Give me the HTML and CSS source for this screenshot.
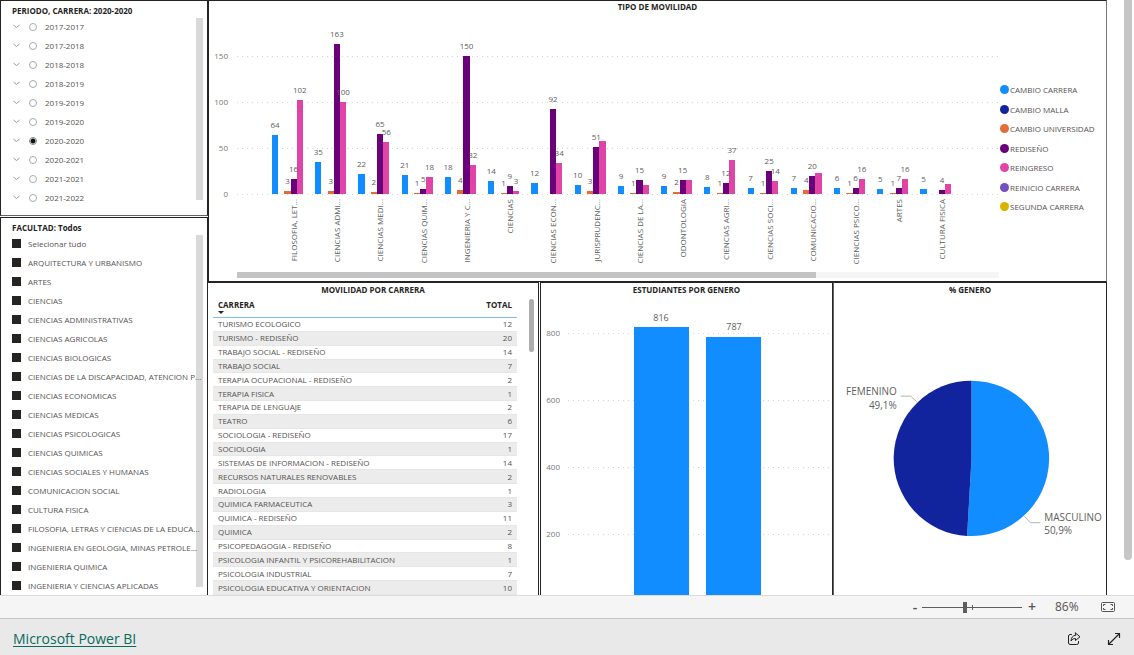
FILE: index.html
```html
<!DOCTYPE html>
<html lang="es">
<head>
<meta charset="utf-8">
<meta name="viewport" content="width=device-width, initial-scale=1">
<title>Microsoft Power BI</title>
<link rel="stylesheet" href="styles.css">
</head>
<body>
<main class="report">
  <div class="canvas">
    <aside class="slicers">
      <section class="slicer slicer-period">
        <h2 class="title">PERIODO, CARRERA: 2020-2020</h2>
        <ul class="options" id="periods"></ul>
        <div class="scroll-thumb"></div>
      </section>
      <section class="slicer slicer-faculty">
        <h2 class="title">FACULTAD: Todos</h2>
        <ul class="options" id="faculties"></ul>
        <div class="scroll-thumb"></div>
      </section>
    </aside>

    <div class="visuals">
      <section class="panel mobility">
        <h2 class="title centered">TIPO DE MOVILIDAD</h2>
        <div class="mobility-body">
          <div class="plot">
            <svg id="mobility-chart" class="chart" viewBox="0 0 791 258" role="img" aria-label="Tipo de movilidad por facultad"></svg>
            <div class="h-scroll"><div class="h-thumb"></div></div>
          </div>
          <ul class="legend">
            <li><i class="dot blue"></i>CAMBIO CARRERA</li>
            <li><i class="dot navy"></i>CAMBIO MALLA</li>
            <li><i class="dot orange"></i>CAMBIO UNIVERSIDAD</li>
            <li><i class="dot purple"></i>REDISEÑO</li>
            <li><i class="dot pink"></i>REINGRESO</li>
            <li><i class="dot violet"></i>REINICIO CARRERA</li>
            <li><i class="dot gold"></i>SEGUNDA CARRERA</li>
          </ul>
        </div>
      </section>

      <div class="lower">
        <section class="panel careers">
          <h2 class="title centered">MOVILIDAD POR CARRERA</h2>
          <table class="career-table">
            <thead><tr><th>CARRERA<span class="sort"></span></th><th class="num">TOTAL</th></tr></thead>
            <tbody id="careers"></tbody>
          </table>
          <div class="table-thumb"></div>
        </section>

        <section class="panel gender-bars">
          <h2 class="title centered">ESTUDIANTES POR GENERO</h2>
          <svg class="chart" viewBox="0 0 291 306" role="img" aria-label="Estudiantes por genero">
            <g class="grid">
              <path d="M27 37H288M27 104H288M27 171H288M27 238H288"/>
            </g>
            <g class="axis">
              <text x="19" y="40" text-anchor="end">800</text>
              <text x="19" y="107" text-anchor="end">600</text>
              <text x="19" y="174" text-anchor="end">400</text>
              <text x="19" y="241" text-anchor="end">200</text>
            </g>
            <rect class="blue" x="93" y="31" width="55" height="275"/>
            <rect class="blue" x="165" y="41" width="55" height="265"/>
            <g class="bar-value">
              <text x="120" y="25" text-anchor="middle">816</text>
              <text x="193" y="34" text-anchor="middle">787</text>
            </g>
          </svg>
        </section>

        <section class="panel gender-share">
          <h2 class="title centered">% GENERO</h2>
          <svg class="chart" viewBox="0 0 273 306" role="img" aria-label="Porcentaje por genero">
            <path class="blue" d="M138 163V85A78 78 0 1 1 133.600 240.880Z"/>
            <path class="navy" d="M138 163L133.600 240.880A78 78 0 0 1 138 85Z"/>
            <path class="leader" d="M67 100.500H77L83 106M191 221L197 227.500H207"/>
            <g class="pie-label">
              <text x="63" y="99" text-anchor="end">FEMENINO</text>
              <text x="63" y="113" text-anchor="end">49,1%</text>
              <text x="211" y="226">MASCULINO</text>
              <text x="211" y="239">50,9%</text>
            </g>
          </svg>
        </section>
      </div>
    </div>
  </div>
  <div class="page-scroll"><div class="page-thumb"></div></div>
</main>

<div class="zoom-bar">
  <button class="step" type="button" aria-label="Reducir">-</button>
  <input class="zoom-range" type="range" min="0" max="200" value="86" aria-label="Zoom">
  <button class="step" type="button" aria-label="Ampliar">+</button>
  <output class="zoom-value">86%</output>
  <button class="icon-button" type="button" aria-label="Ajustar a la página">
    <svg width="14" height="10" viewBox="0 0 14 10" fill="none" stroke="#555">
      <rect x=".5" y=".5" width="13" height="9" rx="1"/>
      <path d="M2.500 4V2.500H4.500M9.500 2.500H11.500V4M11.500 6V7.500H9.500M4.500 7.500H2.500V6"/>
    </svg>
  </button>
</div>

<footer class="footer">
  <a class="brand" href="#">Microsoft Power BI</a>
  <div class="actions">
    <button class="icon-button" type="button" aria-label="Compartir">
      <svg width="14" height="14" viewBox="0 0 14 14" fill="none" stroke="#222" stroke-linejoin="round" stroke-linecap="round">
        <path d="M4.500 2.500H3A1.800 1.800 0 0 0 1.500 4V11A1.800 1.800 0 0 0 3 12.500H9.500A1.800 1.800 0 0 0 11.500 11V9.500"/>
        <path d="M8.500 1L13 4.800L8.500 8.500V6.500C6.500 6.500 5.200 7.200 4 9C4.200 5.500 5.700 3.500 8.500 3.200Z"/>
      </svg>
    </button>
    <button class="icon-button" type="button" aria-label="Pantalla completa">
      <svg width="14" height="14" viewBox="0 0 14 14" fill="none" stroke="#222" stroke-width="1.200">
        <path d="M1.500 12.500L12.500 1.500M8 1.500H12.500V6M1.500 8V12.500H6"/>
      </svg>
    </button>
  </div>
</footer>
<script src="app.js"></script>
</body>
</html>
```
FILE: styles.css
```css
* { box-sizing: border-box; }

body {
  margin: 0;
  height: 100vh;
  display: flex;
  flex-direction: column;
  overflow: hidden;
  background: #fff;
  color: #55534f;
  font: 8px/13px "Open Sans", "Noto Sans", sans-serif;
}

ul { list-style: none; margin: 0; padding: 0; }

button {
  border: 0;
  padding: 0;
  background: none;
  color: inherit;
  font: inherit;
}

.report { flex: 1; min-height: 0; display: flex; overflow: hidden; }
.canvas { flex: 1; display: grid; grid-template-columns: 208px 1fr; min-width: 0; }

.page-scroll { flex: none; width: 27px; padding: 0 2px 35px 17px; }
.page-thumb { height: 100%; border-radius: 0 0 4px 4px; background: #c6c6c6; }

.title { margin: 0; font-size: 8px; line-height: 13px; font-weight: 700; color: #252423; }
.centered { text-align: center; }

/* slicers */
.slicers { display: flex; flex-direction: column; gap: 1px; min-height: 0; }
.slicer { position: relative; border: 1px solid #252423; padding: 3px 7px 8px 11px; }
.slicer-period { flex: none; border-bottom-color: #666; }
.slicer-faculty { flex: 1; border-bottom: 0; padding-bottom: 0; }
.option { display: flex; align-items: center; height: 19px; white-space: nowrap; }
.option label { display: flex; align-items: center; }
.option input { appearance: none; flex: none; margin: 0; }
.expand { display: flex; width: 17px; padding-left: 1px; }
.option input[type="radio"] {
  width: 8px;
  height: 8px;
  margin-right: 8px;
  border: 1px solid #aaa;
  border-radius: 50%;
}
.option input[type="radio"]:checked { border-color: #888; background: radial-gradient(#111 0 2px, #fff 3px); }
.option input[type="checkbox"] { width: 9px; height: 9px; margin-right: 7px; background: #252423; }
.scroll-thumb { position: absolute; top: 17px; right: 4px; bottom: 15px; width: 7px; background: #d9d9d9; z-index: -1; }
.slicer-faculty .scroll-thumb { bottom: 8px; }

/* visuals */
.visuals { display: flex; flex-direction: column; min-width: 0; min-height: 0; }
.panel { position: relative; border: 1px solid #252423; min-width: 0; overflow: hidden; }
.mobility { flex: none; border-right-color: #777; }
.mobility .title { line-height: 12px; padding-bottom: 1px; }
.mobility-body { display: flex; }
.plot { flex: 791; min-width: 0; padding-bottom: 3px; }
.legend {
  flex: 106;
  display: flex;
  flex-direction: column;
  justify-content: space-between;
  padding: 69px 0 68px;
  white-space: nowrap;
}
.legend li { display: flex; align-items: center; gap: 1px; margin-right: -4px; }
.dot { width: 9px; height: 9px; border-radius: 50%; }

.blue { fill: #118dff; background: #118dff; }
.navy { fill: #12239e; background: #12239e; }
.orange { fill: #e66c37; background: #e66c37; }
.purple { fill: #6b007b; background: #6b007b; }
.pink { fill: #e044a7; background: #e044a7; }
.violet { background: #744ec2; }
.gold { background: #d9b300; }

.chart { display: block; width: 100%; height: auto; font-size: 8px; }
.chart rect { shape-rendering: crispEdges; }
.grid { stroke: #d4d4d4; stroke-dasharray: 1 4; shape-rendering: crispEdges; }
.axis { fill: #777; }
.values, .categories { fill: #605e5c; }
.bar-value { fill: #605e5c; font-size: 9px; }
.pie-label { fill: #605e5c; font-size: 10px; }
.leader { fill: none; stroke: #b3b3b3; }

.h-scroll { height: 6px; margin: 0 1px 0 28px; background: #f5f5f5; }
.h-thumb { width: 76%; height: 100%; background: #c3c3c3; }

.lower { flex: 1; min-height: 0; display: grid; grid-template-columns: 332fr 293fr 274fr; }
.lower .panel { border-bottom: 0; }
.careers { border-left: 0; margin-right: 1px; }
.gender-share { border-left-color: #666; }

.career-table {
  width: calc(100% - 26px);
  height: 299px;
  margin-left: 5px;
  border-collapse: separate;
  border-spacing: 0;
  line-height: 12px;
}
.career-table th {
  height: 22px;
  padding: 3px 5px 0;
  border-bottom: 1px solid #83bdee;
  text-align: left;
  vertical-align: top;
  line-height: 12px;
  color: #252423;
}
.career-table td { padding: 0 5px; border-bottom: 1px solid #e6e6e6; }
.career-table tbody tr:nth-child(even) { background: #ececec; }
.career-table .num { text-align: right; }
.sort { display: block; width: 0; border: 3px solid transparent; border-top-color: #252423; border-bottom: 0; }
.table-thumb {
  position: absolute;
  top: 16px;
  right: 4px;
  width: 5px;
  height: 53px;
  border-radius: 3px;
  background: #adadad;
}

/* zoom bar */
.zoom-bar {
  flex: none;
  height: 23px;
  display: flex;
  align-items: center;
  justify-content: flex-end;
  padding-right: 19px;
  border-top: 1px solid #dcdcdc;
  background: #f5f5f5;
}
.step { width: 14px; font-size: 14px; line-height: 20px; font-weight: 600; }
.zoom-range {
  appearance: none;
  width: 100px;
  height: 11px;
  margin: 0 3px 0 0;
  background:
    linear-gradient(#605e5c, #605e5c) center / 100% 1px no-repeat,
    linear-gradient(#605e5c, #605e5c) center / 1px 5px no-repeat;
}
.zoom-range::-webkit-slider-thumb { appearance: none; width: 4px; height: 11px; background: #605e5c; }
.zoom-value { width: 46px; padding-left: 16px; margin-right: 16px; font-size: 12px; line-height: 20px; }
.icon-button { display: flex; }

/* footer */
.footer {
  flex: none;
  height: 37px;
  display: flex;
  align-items: center;
  justify-content: space-between;
  padding: 3px 13px 0;
  border-top: 1px solid #c6c6c6;
  background: #e9e9e9;
}
.brand { color: #0b6a5d; font-size: 14px; line-height: 20px; text-underline-offset: 2px; }
.actions { display: flex; gap: 26px; }
```
FILE: app.js
```js
const periods = ["2017-2017", "2017-2018", "2018-2018", "2018-2019", "2019-2019",
  "2019-2020", "2020-2020", "2020-2021", "2021-2021", "2021-2022"];

const faculties = ["Selecionar tudo", "ARQUITECTURA Y URBANISMO", "ARTES", "CIENCIAS",
  "CIENCIAS ADMINISTRATIVAS", "CIENCIAS AGRICOLAS", "CIENCIAS BIOLOGICAS",
  "CIENCIAS DE LA DISCAPACIDAD, ATENCION P...", "CIENCIAS ECONOMICAS",
  "CIENCIAS MEDICAS", "CIENCIAS PSICOLOGICAS", "CIENCIAS QUIMICAS",
  "CIENCIAS SOCIALES Y HUMANAS", "COMUNICACION SOCIAL", "CULTURA FISICA",
  "FILOSOFIA, LETRAS Y CIENCIAS DE LA EDUCA...",
  "INGENIERIA EN GEOLOGIA, MINAS PETROLE...", "INGENIERIA QUIMICA",
  "INGENIERIA Y CIENCIAS APLICADAS"];

const careers = [["TURISMO ECOLOGICO", 12], ["TURISMO - REDISEÑO", 20],
  ["TRABAJO SOCIAL - REDISEÑO", 14], ["TRABAJO SOCIAL", 7],
  ["TERAPIA OCUPACIONAL - REDISEÑO", 2], ["TERAPIA FISICA", 1],
  ["TERAPIA DE LENGUAJE", 2], ["TEATRO", 6], ["SOCIOLOGIA - REDISEÑO", 17],
  ["SOCIOLOGIA", 1], ["SISTEMAS DE INFORMACION - REDISEÑO", 14],
  ["RECURSOS NATURALES RENOVABLES", 2], ["RADIOLOGIA", 1],
  ["QUIMICA FARMACEUTICA", 3], ["QUIMICA - REDISEÑO", 11], ["QUIMICA", 2],
  ["PSICOPEDAGOGIA - REDISEÑO", 8], ["PSICOLOGIA INFANTIL Y PSICOREHABILITACION", 1],
  ["PSICOLOGIA INDUSTRIAL", 7], ["PSICOLOGIA EDUCATIVA Y ORIENTACION", 10]];

// name, cambio carrera, cambio universidad, rediseño, reingreso, hide last label
const mobility = [
  ["FILOSOFIA, LET...", 64, 3, 16, 102],
  ["CIENCIAS ADMI...", 35, 3, 163, 100],
  ["CIENCIAS MEDI...", 22, 2, 65, 56],
  ["CIENCIAS QUIM...", 21, 1, 5, 18],
  ["INGENIERIA Y C...", 18, 4, 150, 32],
  ["CIENCIAS", 14, 1, 9, 3],
  ["CIENCIAS ECON...", 12, 0, 92, 34],
  ["JURISPRUDENC...", 10, 3, 51, 58, true],
  ["CIENCIAS DE LA...", 9, 1, 15, 10, true],
  ["ODONTOLOGIA", 9, 2, 15, 15, true],
  ["CIENCIAS AGRI...", 8, 1, 12, 37],
  ["CIENCIAS SOCI...", 7, 1, 25, 14],
  ["COMUNICACIO...", 7, 4, 20, 23, true],
  ["CIENCIAS PSICO...", 6, 1, 6, 16],
  ["ARTES", 5, 1, 7, 16],
  ["CULTURA FISICA", 5, 0, 4, 11, true]
];

document.getElementById("periods").innerHTML = periods.map(p => `
  <li class="option">
    <button class="expand" type="button" aria-label="Expandir ${p}">
      <svg width="7" height="5" viewBox="0 0 7 5" fill="none" stroke="#999"><path d="M.5 1L3.500 3.500L6.500 1"/></svg>
    </button>
    <label><input type="radio" name="period"${p === "2020-2020" ? " checked" : ""}><span>${p}</span></label>
  </li>`).join("");

document.getElementById("faculties").innerHTML = faculties.map(f => `
  <li class="option"><label><input type="checkbox" checked><span>${f}</span></label></li>`).join("");

document.getElementById("careers").innerHTML = careers.map(([name, total]) =>
  `<tr><td>${name}</td><td class="num">${total}</td></tr>`).join("");

const base = 180;
const unit = 0.92;
const slot = 6.18;
const step = 43.23;
const series = [[0, "blue"], [2, "orange"], [3, "purple"], [4, "pink"]];
let grid = "", axis = "", bars = "", values = "", categories = "";

for (const tick of [0, 50, 100, 150]) {
  const y = base - tick * unit;
  grid += `<path d="M28 ${y}H790"/>`;
  axis += `<text x="19" y="${y + 3}" text-anchor="end">${tick}</text>`;
}

mobility.forEach(([name, ...data], i) => {
  const left = 63 + i * step;
  const hideLast = data[4];
  series.forEach(([position, color], s) => {
    const value = data[s];
    if (!value) return;
    const x = left + position * slot;
    const top = base - value * unit;
    bars += `<rect class="${color}" x="${x}" y="${top}" width="${slot}" height="${value * unit}"/>`;
    if (s === 3 && hideLast) return;
    values += `<text x="${x + slot / 2}" y="${top - 7}" text-anchor="middle">${value}</text>`;
  });
  categories += `<text transform="translate(${left + 25} 185) rotate(-90)" text-anchor="end">${name}</text>`;
});

document.getElementById("mobility-chart").innerHTML =
  `<g class="grid">${grid}</g><g class="axis">${axis}</g>${bars}` +
  `<g class="values">${values}</g><g class="categories">${categories}</g>`;
```
